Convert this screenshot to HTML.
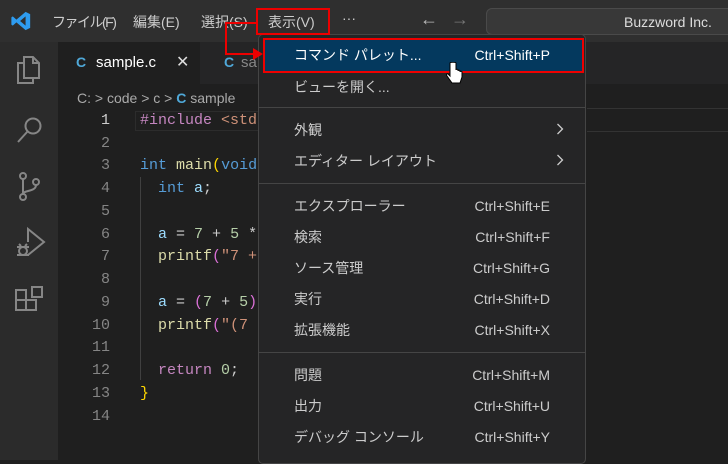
<!DOCTYPE html>
<html><head><meta charset="utf-8"><style>
*{margin:0;padding:0;box-sizing:border-box}
body{width:728px;height:460px;overflow:hidden;background:#1f1f1f;position:relative;font-family:"Liberation Sans","Noto Sans CJK JP",sans-serif;color:#ccc}
.abs{position:absolute}
#title{left:0;top:0;width:728px;height:42px;background:#2f2f2f}
.mi{top:12px;font-size:14px;color:#cccccc;line-height:20px}
#act{left:0;top:42px;width:58px;height:418px;background:#2b2b2b}
#tabs{left:58px;top:42px;width:670px;height:42px;background:#252526}
#tab1{left:58px;top:42px;width:142px;height:42px;background:#1f1f1f}
.code{font-family:"Liberation Mono",monospace;font-size:15px;white-space:pre;line-height:18px}
.ln{width:50px;text-align:right;left:60px;color:#858585}
#menu{left:258px;top:34px;width:328px;height:430px;background:#252526;border:1px solid #454545;border-radius:5px}
.it{left:294px;font-size:14px;color:#cccccc;line-height:20px}
.sc{right:178px;font-size:14px;color:#cccccc;text-align:right;line-height:20px}
.sep{left:259px;width:326px;height:1px;background:#454545}
.red{background:#e00}
</style></head><body>
<div id="title" class="abs"></div>
<svg class="abs" style="left:10px;top:10px" width="22" height="22" viewBox="0 0 24 24"><path d="M17 2 L22 4.5 V19.5 L17 22 L7 13.5 L3 17 L1.5 16 V8 L3 7 L7 10.5 Z M17 7 L11 12 L17 17 Z" fill="#2e9cf0"/></svg>
<div class="abs mi" style="left:52px;letter-spacing:-1.5px">ファイル(F)</div>
<div class="abs mi" style="left:133px">編集(E)</div>
<div class="abs mi" style="left:201px">選択(S)</div>
<div class="abs mi" style="left:268px">表示(V)</div>
<div class="abs mi" style="left:342px;top:8px">···</div>
<div class="abs" style="left:420px;top:9px;font-size:18px;color:#bbb">←</div>
<div class="abs" style="left:451px;top:9px;font-size:18px;color:#777">→</div>
<div class="abs" style="left:486px;top:8px;width:250px;height:27px;background:#383838;border:1px solid #4a4a4a;border-radius:6px"></div>
<div class="abs" style="left:624px;top:12px;font-size:14px;color:#ddd;line-height:20px">Buzzword Inc.</div>

<div id="act" class="abs"></div>
<svg class="abs" style="left:14px;top:54px" width="32" height="270" viewBox="0 0 32 270" fill="none" stroke="#868686" stroke-width="2">
<path d="M10 3 H19 L25 9 V24 H10 Z M19 3 V9 H25 M10 9 H4 V29 H19 V24"/>
<circle cx="19" cy="72" r="7.5"/><path d="M13.5 77.5 L4 88"/>
<circle cx="9" cy="122" r="3"/><circle cx="9" cy="143" r="3"/><circle cx="22" cy="128" r="3"/><path d="M9 125 V140 M22 131 C22 138 9 136 9 140"/>
<path d="M14 188 V175 L30 188 L14 201"/><circle cx="9" cy="197" r="4"/><path d="M3 193 H15 M3 201 H15 M5 190 L7 192 M13 190 L11 192"/>
<path d="M2 246 H12 V256 H2 Z M12 246 H22 V256 H12 Z M2 236 H12 V246 H2 Z M18 233 H28 V243 H18 Z"/>
</svg>

<div id="tabs" class="abs"></div>
<div id="tab1" class="abs"></div>
<div class="abs" style="left:76px;top:54px;font-size:14px;color:#4fa8d8;font-weight:bold">C</div>
<div class="abs" style="left:96px;top:54px;font-size:15px;color:#fff">sample.c</div>
<div class="abs" style="left:176px;top:52px;font-size:16px;color:#ddd">✕</div>
<div class="abs" style="left:224px;top:54px;font-size:14px;color:#4fa8d8;font-weight:bold">C</div>
<div class="abs" style="left:241px;top:54px;font-size:15px;color:#888">sa</div>
<div class="abs" style="left:77px;top:90px;font-size:14px;color:#aaa">C: &gt; code &gt; c &gt; <b style="color:#4fa8d8">C</b> sample</div>
<div class="abs" style="left:135px;top:111px;width:125px;height:20px;border:1px solid #2c2c2c"></div>
<div class="abs" style="left:140px;top:177px;width:1px;height:203px;background:#404040"></div>

<div class="abs code ln" style="top:112px;color:#ccc">1</div>
<div class="abs code ln" style="top:135px">2</div>
<div class="abs code ln" style="top:157px">3</div>
<div class="abs code ln" style="top:180px">4</div>
<div class="abs code ln" style="top:203px">5</div>
<div class="abs code ln" style="top:226px">6</div>
<div class="abs code ln" style="top:248px">7</div>
<div class="abs code ln" style="top:271px">8</div>
<div class="abs code ln" style="top:294px">9</div>
<div class="abs code ln" style="top:317px">10</div>
<div class="abs code ln" style="top:339px">11</div>
<div class="abs code ln" style="top:362px">12</div>
<div class="abs code ln" style="top:385px">13</div>
<div class="abs code ln" style="top:408px">14</div>
<div class="abs code" style="left:140px;top:112px;color:#c586c0">#include <span style="color:#ce9178">&lt;std</span></div>
<div class="abs code" style="left:140px;top:157px"><span style="color:#569cd6">int</span> <span style="color:#dcdcaa">main</span><span style="color:#ffd700">(</span><span style="color:#569cd6">void</span></div>
<div class="abs code" style="left:158px;top:180px"><span style="color:#569cd6">int</span> <span style="color:#9cdcfe">a</span>;</div>
<div class="abs code" style="left:158px;top:226px;color:#ccc"><span style="color:#9cdcfe">a</span> = <span style="color:#b5cea8">7</span> + <span style="color:#b5cea8">5</span> *</div>
<div class="abs code" style="left:158px;top:248px"><span style="color:#dcdcaa">printf</span><span style="color:#da70d6">(</span><span style="color:#ce9178">"7 +</span></div>
<div class="abs code" style="left:158px;top:294px;color:#ccc"><span style="color:#9cdcfe">a</span> = <span style="color:#da70d6">(</span><span style="color:#b5cea8">7</span> + <span style="color:#b5cea8">5</span><span style="color:#da70d6">)</span></div>
<div class="abs code" style="left:158px;top:317px"><span style="color:#dcdcaa">printf</span><span style="color:#da70d6">(</span><span style="color:#ce9178">"(7</span></div>
<div class="abs code" style="left:158px;top:362px"><span style="color:#c586c0">return</span> <span style="color:#b5cea8">0</span><span style="color:#ccc">;</span></div>
<div class="abs code" style="left:140px;top:385px;color:#ffd700">}</div>

<div class="abs" style="left:587px;top:108px;width:141px;height:1px;background:#333"></div>
<div class="abs" style="left:587px;top:131px;width:141px;height:1px;background:#333"></div>

<div id="menu" class="abs"></div>
<div class="abs" style="left:264px;top:39px;width:319px;height:33px;background:#04395e"></div>
<div class="abs it" style="top:45px;color:#fff">コマンド パレット...</div><div class="abs sc" style="top:45px;color:#fff">Ctrl+Shift+P</div>
<div class="abs it" style="top:77px">ビューを開く...</div>
<div class="sep abs" style="top:107px"></div>
<div class="abs it" style="top:120px">外観</div>
<svg class="abs" style="left:556px;top:123px" width="8" height="12"><path d="M1.5 1 L6.5 6 L1.5 11" fill="none" stroke="#ccc" stroke-width="1.3"/></svg>
<div class="abs it" style="top:151px">エディター レイアウト</div>
<svg class="abs" style="left:556px;top:154px" width="8" height="12"><path d="M1.5 1 L6.5 6 L1.5 11" fill="none" stroke="#ccc" stroke-width="1.3"/></svg>
<div class="sep abs" style="top:183px"></div>
<div class="abs it" style="top:196px">エクスプローラー</div><div class="abs sc" style="top:196px">Ctrl+Shift+E</div>
<div class="abs it" style="top:227px">検索</div><div class="abs sc" style="top:227px">Ctrl+Shift+F</div>
<div class="abs it" style="top:258px">ソース管理</div><div class="abs sc" style="top:258px">Ctrl+Shift+G</div>
<div class="abs it" style="top:289px">実行</div><div class="abs sc" style="top:289px">Ctrl+Shift+D</div>
<div class="abs it" style="top:320px">拡張機能</div><div class="abs sc" style="top:320px">Ctrl+Shift+X</div>
<div class="sep abs" style="top:352px"></div>
<div class="abs it" style="top:365px">問題</div><div class="abs sc" style="top:365px">Ctrl+Shift+M</div>
<div class="abs it" style="top:396px">出力</div><div class="abs sc" style="top:396px">Ctrl+Shift+U</div>
<div class="abs it" style="top:427px">デバッグ コンソール</div><div class="abs sc" style="top:427px">Ctrl+Shift+Y</div>

<div class="abs" style="left:256px;top:8px;width:74px;height:27px;border:2px solid #e00"></div>
<div class="abs" style="left:263px;top:38px;width:321px;height:35px;border:2px solid #e00"></div>
<div class="abs red" style="left:225px;top:22px;width:32px;height:2px"></div>
<div class="abs red" style="left:225px;top:22px;width:2px;height:33px"></div>
<div class="abs red" style="left:225px;top:53px;width:30px;height:2px"></div>
<svg class="abs" style="left:253px;top:48px" width="10" height="12"><path d="M0 0 L10 6 L0 12 Z" fill="#e00"/></svg>
<svg class="abs" style="left:446px;top:62px" width="18" height="24" viewBox="0 0 18 24"><path d="M4 1 V14 L2 12 C1 11 0 13 1 14 L6 21 H14 L16 15 V10 C16 9 14 9 14 10 V9 C14 8 12 8 12 9 V8 C12 7 10 7 10 8 V1 C10 0 4 0 4 1 Z" fill="#fff" stroke="#000" stroke-width="1"/></svg>
</body></html>
